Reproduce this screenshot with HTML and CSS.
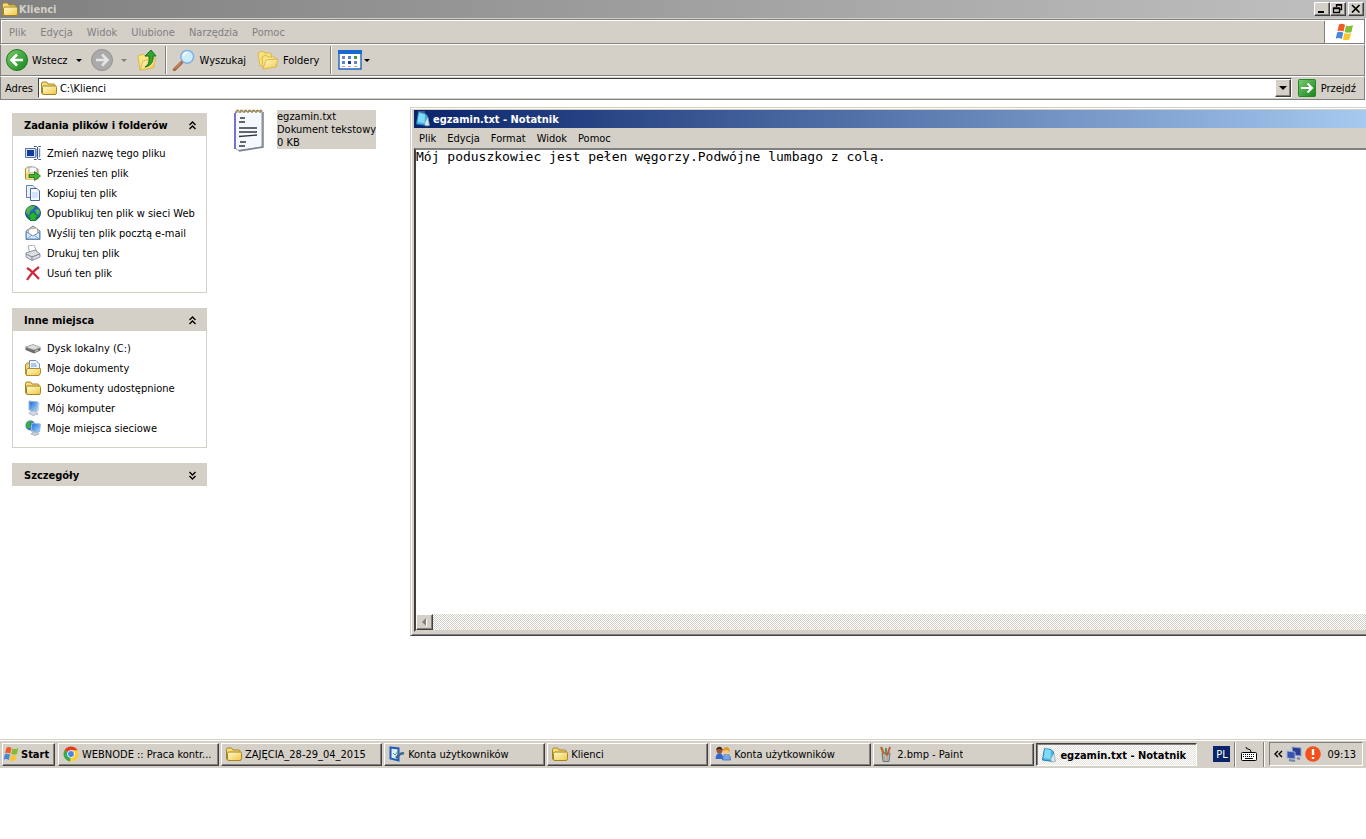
FILE: index.html
```
<!DOCTYPE html>
<html lang="pl">
<head>
  <meta charset="UTF-8" />
  <meta name="viewport" content="width=device-width, initial-scale=1.0"/>
  <title>Klienci</title>
  <link rel="stylesheet" href="styles.css">
</head>
<body>

  <!-- SHARED ICONS -->
  <svg class="sprite" aria-hidden="true">
    <defs>
      <linearGradient id="gold" x1="0" y1="0" x2="1" y2="1">
        <stop offset="0" stop-color="#fffbd0"/><stop offset="1" stop-color="#efc744"/>
      </linearGradient>
      <linearGradient id="green" x1="0" y1="0" x2="1" y2="1">
        <stop offset="0" stop-color="#7ccb6d"/><stop offset="1" stop-color="#14851c"/>
      </linearGradient>
      <linearGradient id="blue" x1="0" y1="0" x2="1" y2="1">
        <stop offset="0" stop-color="#1d63d8"/><stop offset="1" stop-color="#9be0ff"/>
      </linearGradient>
      <symbol id="folder" viewBox="0 0 16 16">
        <path d="M.5 12V3.500Q.5 2 2 2H5.500L7 4H12.500Q14 4 14 5.500V12Q14 14 12.500 14H2Q.5 14 .5 12Z" fill="#f6dc76" stroke="#a8831d"/>
        <path d="M3 6H14.500Q15.500 6 15.500 7.500V12.500Q15.500 14.500 14 14.500H3Q1.500 14.500 1.500 13V7.500Q1.500 6 3 6Z" fill="url(#gold)" stroke="#a8831d"/>
      </symbol>
      <symbol id="notes" viewBox="0 0 16 16">
        <path d="M3.500 1.500L10 2.500L12.500 5L12 14.500L1.500 13Z" fill="#49b4e8" stroke="#247caf"/>
        <path d="M4 2L10 3L9.500 12L2.500 11Z" fill="#7fd9f7"/>
        <path d="M9.500 12L13 6L14.500 14.500L10.500 15Z" fill="#d3e6ee" stroke="#8297a3" stroke-width=".6"/>
        <path d="M3.500 1H10" stroke="#d8e7ee" stroke-dasharray="1 1"/>
      </symbol>
      <symbol id="flag" viewBox="0 0 20 18">
        <path d="M4 1.500Q7 0 10 2L8.500 8.500Q5.500 7 2.500 8.200Z" fill="#f15a28"/>
        <path d="M11 2.500Q14.500 4 18 2L16.500 9Q13 10.500 9.700 9Z" fill="#83bd37"/>
        <path d="M2.200 9.200Q5.500 8 8.300 9.700L6.800 16Q3.800 14.200.7 15.700Z" fill="#4888d8"/>
        <path d="M9.400 10.100Q13 11.500 16.200 10.100L14.600 16.300Q11 18 7.900 16.500Z" fill="#fbc72c"/>
      </symbol>
      <symbol id="up" viewBox="0 0 9 9">
        <path d="M1.500 4L4.500 1L7.500 4M1.500 8L4.500 5L7.500 8" fill="none" stroke="#000" stroke-width="1.400"/>
      </symbol>
      <symbol id="monitor" viewBox="0 0 16 16">
        <path d="M4 1L13 2L12 11L4 10Z" fill="url(#blue)" stroke="#a5b8d8"/>
        <path d="M13 2L14.500 3L13.500 11.500L12 11Z" fill="#c5cedd"/>
        <path d="M6 11H11L13 14L8 15.500L4 13.500Z" fill="#d1d8e4" stroke="#8e9bb0" stroke-width=".6"/>
      </symbol>
    </defs>
  </svg>

  <main class="explorer">
    <header class="titlebar">
      <svg class="icon"><use href="#folder"/></svg>
      <h1>Klienci</h1>
      <div class="window-buttons">
        <button type="button" aria-label="Minimalizuj"><svg viewBox="0 0 12 10"><path d="M2 8H8" stroke="#000" stroke-width="2"/></svg></button>
        <button type="button" aria-label="Przywróć"><svg viewBox="0 0 12 10"><path d="M4.500 3V.5H9.500V5.500H8M4 1H10M1.500 4.500H7.500V8.500H1.500ZM1 4H8" fill="none" stroke="#000" stroke-width="1.300"/></svg></button>
        <button type="button" class="close" aria-label="Zamknij"><svg viewBox="0 0 12 10"><path d="M2 1L9.500 8.500M9.500 1L2 8.500" stroke="#000" stroke-width="1.700"/></svg></button>
      </div>
    </header>

    <div class="menu-row">
      <nav class="menu disabled">
        <button type="button">Plik</button>
        <button type="button">Edycja</button>
        <button type="button">Widok</button>
        <button type="button">Ulubione</button>
        <button type="button">Narzędzia</button>
        <button type="button">Pomoc</button>
      </nav>
      <div class="brand"><svg><use href="#flag"/></svg></div>
    </div>

    <div class="toolbar">
      <button type="button" class="tool back">
        <svg class="tool-icon" viewBox="0 0 22 22"><circle cx="11" cy="11" r="10.500" fill="url(#green)" stroke="#187c20"/><path d="M17 11H6M11 5.500L5.500 11L11 16.500" fill="none" stroke="#fff" stroke-width="2.600"/></svg>
        Wstecz
      </button>
      <button type="button" class="drop" aria-label="Historia wstecz"></button>
      <button type="button" class="tool" aria-label="Dalej">
        <svg class="tool-icon" viewBox="0 0 22 22"><circle cx="11" cy="11" r="10.500" fill="#aaa" stroke="#929292"/><path d="M5 11H16M11 5.500L16.500 11L11 16.500" fill="none" stroke="#e5e5e5" stroke-width="2.600"/></svg>
      </button>
      <button type="button" class="drop grey" aria-label="Historia dalej"></button>
      <button type="button" class="tool" aria-label="Do góry">
        <svg class="tool-icon" viewBox="0 0 22 22"><path d="M2 7L7 5L9 7L16 6L18 18L4 21Z" fill="#f9e582" stroke="#dcb84f"/><path d="M4 21L7 12L20 9L17 19Z" fill="url(#gold)" stroke="#dcb84f"/><path d="M9 18Q14 16 13 7H9L15 1L20 7H17Q18 16 9 18Z" fill="#37a52c" stroke="#16751b"/></svg>
      </button>
      <span class="sep"></span>
      <button type="button" class="tool search">
        <svg class="tool-icon wide" viewBox="0 0 24 24"><path d="M1.500 22.500L9.500 14.500" stroke="#a8653f" stroke-width="3.500" stroke-linecap="round"/><path d="M2 21.500L9 14.500" stroke="#e0a67e"/><circle cx="15.500" cy="8.500" r="7" fill="#ccecff" stroke="#7baee2" stroke-width="1.600"/><path d="M11 8Q12 4 16 4" fill="none" stroke="#fff" stroke-width="2"/></svg>
        Wyszukaj
      </button>
      <button type="button" class="tool folders">
        <svg class="tool-icon" viewBox="0 0 22 22"><path d="M1 4L5 2L8 4L14 4L15 14L3 17Z" fill="#f8e27a" stroke="#dcb84f"/><path d="M5 8L9 6L11 8L18 8L20 17L6 20Z" fill="#f9e484" stroke="#dcb84f"/><path d="M6 20L9 11L21 10L19 18Z" fill="url(#gold)" stroke="#dcb84f"/></svg>
        Foldery
      </button>
      <span class="sep"></span>
      <button type="button" class="tool views" aria-label="Widoki">
        <svg class="tool-icon wide" viewBox="0 0 24 20"><path d="M1 1H23V19H1Z" fill="#fff" stroke="#1b65bd" stroke-width="1.400"/><path d="M0 0H24V4H0Z" fill="#176bd0"/><path d="M4 6h3v3H4zM16 11h3v3h-3z" fill="#777fb4"/><path d="M10 6h3v3h-3zM4 11h3v3H4z" fill="#5484cf"/><path d="M16 6h3v3h-3z" fill="#389c48"/><path d="M10 11h3v3h-3z" fill="#193c92"/><path d="M4 16.500h3M10 16.500h3M16 16.500h3" stroke="#aaa"/></svg>
      </button>
      <button type="button" class="drop" aria-label="Wybierz widok"></button>
    </div>

    <form class="address-bar">
      <label for="address">Adres</label>
      <div class="address-box">
        <svg class="icon"><use href="#folder"/></svg>
        <input type="text" id="address" value="C:\Klienci">
        <button type="button" class="combo" aria-label="Pokaż listę"></button>
      </div>
      <button type="button" class="go">
        <svg viewBox="0 0 18 18"><rect x=".5" y=".5" width="17" height="17" rx="1" fill="url(#green)" stroke="#27882b"/><path d="M3 9H14M9.500 4.500L14 9L9.500 13.500" fill="none" stroke="#fff" stroke-width="2"/></svg>
        Przejdź
      </button>
    </form>

    <div class="content">
      <aside class="sidebar">
        <section class="panel">
          <h2>Zadania plików i folderów <svg><use href="#up"/></svg></h2>
          <ul>
            <li><a href="#"><svg class="icon" viewBox="0 0 16 16"><path d="M.5 3.500H10.500V12.500H.5Z" fill="#d6e4fb" stroke="#5673aa"/><path d="M2 5H9V11H2Z" fill="#123b9d"/><path d="M9 1.500H11.500L12.500 2.500L13.500 1.500H16M12.500 2V14M9 14.500H11.500L12.500 13.500L13.500 14.500H16" fill="none" stroke="#43567c"/><path d="M11 4V12M14.500 3.500V12.500" stroke="#6f8cc2" stroke-width="1.400"/></svg>Zmień nazwę tego pliku</a></li>
            <li><a href="#"><svg class="icon" viewBox="0 0 16 16"><path d="M.5 4L2.500 2H7L8 4H13V14H.5Z" fill="url(#gold)" stroke="#ac8b38"/><path d="M4 2H10L12 4V8H4Z" fill="#f6f7ff" stroke="#9ba6bc"/><path d="M1 8H12V14H1Z" fill="#f5d873"/><path d="M4 9.500H9.500V6.500L15.500 11L9.500 15.500V12.500H4Z" fill="#42b332" stroke="#176f20" stroke-width=".8"/></svg>Przenieś ten plik</a></li>
            <li><a href="#"><svg class="icon" viewBox="0 0 16 16"><path d="M1.500.5H8L10.500 3V12.500H1.500Z" fill="#e7f1ff" stroke="#6681b0"/><path d="M5.500 3.500H12L14.500 6V15.500H5.500Z" fill="#f3f9ff" stroke="#4c6697"/><path d="M7 8H13M7 10H13M7 12H13" stroke="#b5cdec"/></svg>Kopiuj ten plik</a></li>
            <li><a href="#"><svg class="icon" viewBox="0 0 16 16"><circle cx="8" cy="8" r="7.500" fill="#2869bd" stroke="#274f85"/><path d="M2 3Q6 0 10 1L8 4L5 6L4 10L1 8ZM10 5L14 4L15 8L12 10Z" fill="#53b64a"/><path d="M8 7L14 12H11V15.500H5V12H2Z" fill="#26b434" stroke="#0c701c" stroke-width=".7"/></svg>Opublikuj ten plik w sieci Web</a></li>
            <li><a href="#"><svg class="icon" viewBox="0 0 16 16"><path d="M1 6L8 1L15 6V14.500H1Z" fill="#bfdaf6" stroke="#6084af"/><path d="M4 4L12 3L13 9L8 12L3 9Z" fill="#fff" stroke="#d2a772"/><path d="M1.500 7L8 11L14.500 7V14H1.500Z" fill="#d9eaff" stroke="#6f94bd"/><path d="M2 14L7 10M14 14L9 10" stroke="#7e9dc1"/></svg>Wyślij ten plik pocztą e-mail</a></li>
            <li><a href="#"><svg class="icon" viewBox="0 0 16 16"><path d="M3 1L9 0L12 7L5 9Z" fill="#fff" stroke="#a5aaba"/><path d="M1 8L10 5L15 9V12L7 15.500L1 12Z" fill="#dcdee4" stroke="#8c929e"/><path d="M1 9L7 12L15 9M7 12V15" fill="none" stroke="#7b8291"/></svg>Drukuj ten plik</a></li>
            <li><a href="#"><svg class="icon" viewBox="0 0 16 16"><path d="M2 3Q7 6 14 14M14 2Q7 7 2 15" fill="none" stroke="#d02a3d" stroke-width="2.200"/></svg>Usuń ten plik</a></li>
          </ul>
        </section>

        <section class="panel">
          <h2>Inne miejsca <svg><use href="#up"/></svg></h2>
          <ul>
            <li><a href="#"><svg class="icon" viewBox="0 0 16 16"><path d="M.5 7L8 4.500L15.500 7.500V10.500L9 13.500L.5 10Z" fill="#6f6f6f"/><path d="M.5 7L8 4.500L15.500 7.500L9 10Z" fill="#ddd" stroke="#999" stroke-width=".6"/><path d="M10 11.500L13 10" stroke="#d5f1c8"/></svg>Dysk lokalny (C:)</a></li>
            <li><a href="#"><svg class="icon" viewBox="0 0 16 16"><path d="M.5 4.500L2 3H5V14H.5Z" fill="#f4d268" stroke="#b48b2e"/><path d="M4.500.5H11L14.500 4V13H4.500Z" fill="#eef6ff" stroke="#7691ba"/><path d="M6 4H11M6 6H12" stroke="#6d9bd2"/><path d="M2.500 8.500H15.500V13L14 15.500H1.500V10Z" fill="url(#gold)" stroke="#b48b2e"/></svg>Moje dokumenty</a></li>
            <li><a href="#"><svg class="icon"><use href="#folder"/></svg>Dokumenty udostępnione</a></li>
            <li><a href="#"><svg class="icon"><use href="#monitor"/></svg>Mój komputer</a></li>
            <li><a href="#"><svg class="icon" viewBox="0 0 16 16"><circle cx="5.500" cy="5.500" r="5" fill="#2b77c7"/><path d="M1 3Q4 0 7 1L5 4L6 7L3 9L1 6Z" fill="#3dac43"/><path d="M7 3L15.500 4L14.500 12L6 11Z" fill="url(#blue)" stroke="#a4b8df"/><path d="M8 12H12L14 14L10 15.500L6 14Z" fill="#c8d1e0" stroke="#8792a8" stroke-width=".6"/></svg>Moje miejsca sieciowe</a></li>
          </ul>
        </section>

        <section class="panel collapsed">
          <h2>Szczegóły <svg class="flip"><use href="#up"/></svg></h2>
        </section>
      </aside>

      <a href="#" class="file">
        <svg viewBox="0 0 32 46">
          <path d="M2.500 4L29 3V39L5 42.500L2.500 40Z" fill="#f5f8ff" stroke="#8d91a5"/>
          <path d="M2 5V41" stroke="#7b71c8" stroke-width="2"/>
          <path d="M30 4V39L6 43" fill="none" stroke="#77828d" stroke-width="1.500"/>
          <path d="M3 5Q3 1 6 3M7 5Q7 1 10 3M11 5Q11 1 14 3M15 5Q15 1 18 3M19 5Q19 1 22 3M23 5Q23 1 26 3M27 5Q27 1 29 3" fill="none" stroke="#a88745" stroke-width="1.500"/>
          <path d="M7 10H12M6 14H12M6 20H24M6 24H24M6 28.500L24 27M7 34H13M6 38H12" stroke="#34363e" stroke-width="1.400"/>
        </svg>
        <span class="file-info">egzamin.txt<br>Dokument tekstowy<br>0 KB</span>
      </a>
    </div>

    <section class="notepad">
      <header class="titlebar active">
        <svg class="icon"><use href="#notes"/></svg>
        <h2>egzamin.txt - Notatnik</h2>
      </header>
      <nav class="menu">
        <button type="button">Plik</button>
        <button type="button">Edycja</button>
        <button type="button">Format</button>
        <button type="button">Widok</button>
        <button type="button">Pomoc</button>
      </nav>
      <div class="editor">
        <textarea aria-label="Treść pliku" spellcheck="false" wrap="off">Mój poduszkowiec jest pełen węgorzy.Podwójne lumbago z colą.</textarea>
        <div class="scrollbar">
          <button type="button" aria-label="Przewiń w lewo"><svg viewBox="0 0 12 12"><path d="M8 3V11L4 7Z" fill="#fff"/><path d="M7 2V10L3 6Z" fill="#808080"/></svg></button>
        </div>
      </div>
    </section>
  </main>

  <footer class="taskbar">
    <button type="button" class="start"><svg><use href="#flag"/></svg>Start</button>
    <div class="tasks">
      <button type="button"><svg class="icon" viewBox="0 0 16 16"><circle cx="8" cy="8" r="7.500" fill="#ffd02e"/><path d="M8 8L1.500 4.300A7.500 7.500 0 0 1 14.500 4.300H8Z" fill="#e33a2e"/><path d="M8 8L7 15.400A7.500 7.500 0 0 1 1.500 4.300Z" fill="#38a852"/><circle cx="8" cy="8" r="3.800" fill="#fff"/><circle cx="8" cy="8" r="2.900" fill="#4486e8"/></svg><span>WEBNODE :: Praca kontr...</span></button>
      <button type="button"><svg class="icon"><use href="#folder"/></svg><span>ZAJĘCIA_28-29_04_2015</span></button>
      <button type="button"><svg class="icon" viewBox="0 0 16 16"><path d="M1.500 1.500L9.500 2.500V14.500L1.500 12.500Z" fill="#dceeff" stroke="#235cb4" stroke-width="2"/><path d="M4 7L6 9L9 5" fill="none" stroke="#4aa354"/><path d="M7 12L11 8M11 8L15 7" stroke="#42658f" stroke-width="2.500"/></svg><span>Konta użytkowników</span></button>
      <button type="button"><svg class="icon"><use href="#folder"/></svg><span>Klienci</span></button>
      <button type="button"><svg class="icon" viewBox="0 0 16 16"><path d="M.5 13Q1 7 4.500 7Q8 7 8 13Z" fill="#3268cd"/><circle cx="4.500" cy="4.500" r="3" fill="#a15a30"/><path d="M1 4Q2 0 6 1L8 4L4 3Z" fill="#4a2818"/><path d="M7.500 14Q8 8 11.500 8Q15.500 8 15.500 14Z" fill="#79a6e6" stroke="#3561ab" stroke-width=".7"/><circle cx="11.500" cy="5.500" r="3" fill="#f8c886"/><path d="M8 5Q8 1 12 1Q15 2 15 6L12 4Z" fill="#dd9b27"/></svg><span>Konta użytkowników</span></button>
      <button type="button"><svg class="icon" viewBox="0 0 16 16"><path d="M4 7H12L11 15.500H5Z" fill="#a9c1cf" stroke="#607582"/><path d="M6 8L3 1" stroke="#bd6a32" stroke-width="2.400"/><path d="M8 9V2" stroke="#52975b" stroke-width="2"/><path d="M9 10L12 1" stroke="#d64f3d" stroke-width="2"/><path d="M6 9V15M9 9V15" stroke="#d68b45"/></svg><span>2.bmp - Paint</span></button>
      <button type="button" class="pressed"><svg class="icon"><use href="#notes"/></svg><span>egzamin.txt - Notatnik</span></button>
    </div>
    <button type="button" class="lang">PL</button>
    <button type="button" class="keyboard" aria-label="Klawiatura">
      <svg viewBox="0 0 18 14"><path d="M6 0Q6 2 8 2Q11 2 11 5" fill="none" stroke="#000"/><rect x="1.500" y="5.500" width="15" height="8" rx="1" fill="#fff" stroke="#000"/><path d="M3 7.500H15M3 9.500H15" stroke="#000" stroke-dasharray="1 1"/><path d="M5 11.500H13" stroke="#000"/></svg>
    </button>
    <div class="tray">
      <button type="button" aria-label="Pokaż ukryte ikony"><svg class="chevrons" viewBox="0 0 9 8"><path d="M4 1L1 4L4 7M8 1L5 4L8 7" fill="none" stroke="#000" stroke-width="1.400"/></svg></button>
      <svg class="icon" viewBox="0 0 16 16"><path d="M6 1L15 2V10L7 9Z" fill="#293d91" stroke="#8f9dc9"/><path d="M1 5L9 6V13L1 12Z" fill="#3854b0" stroke="#a3b1da"/><path d="M3 14L9 15M11 12L14 13" stroke="#7783a5" stroke-width="2"/></svg>
      <svg class="icon" viewBox="0 0 16 16"><circle cx="8" cy="8" r="7.800" fill="#f2511b"/><path d="M8 3V9M8 11V13" stroke="#fff" stroke-width="2.400"/></svg>
      <time>09:13</time>
    </div>
  </footer>

</body>
</html>
```
FILE: styles.css
```
* {
  box-sizing: border-box;
}

body {
  margin: 0;
  min-height: 100vh;
  padding-bottom: 71px;
  display: flex;
  flex-direction: column;
  overflow: hidden;
  background: #fff;
  color: #000;
  font-family: "DejaVu Sans Condensed", "DejaVu Sans", sans-serif;
  font-stretch: condensed;
  font-size: 11px;
  line-height: 13px;
}

button,
input {
  font: inherit;
  color: inherit;
}

button {
  display: flex;
  align-items: center;
  padding: 0;
  border: none;
  background: none;
  white-space: nowrap;
}

a {
  color: inherit;
  text-decoration: none;
}

svg {
  display: block;
  flex: none;
}

.sprite {
  position: absolute;
  width: 0;
  height: 0;
}

.icon {
  width: 16px;
  height: 16px;
}

/* Explorer window */
.explorer {
  position: relative;
  flex: 1;
  display: flex;
  flex-direction: column;
  overflow: hidden;
}

.titlebar {
  display: flex;
  align-items: center;
  gap: 1px;
  height: 18px;
  padding: 0 2px;
  background: linear-gradient(to right, #808080, #c0c0c0);
  color: #d4d0c8;
}

.titlebar h1,
.titlebar h2 {
  flex: 1;
  margin: 0;
  font-size: 11px;
  font-weight: bold;
}

.window-buttons {
  display: flex;
}

.window-buttons button {
  width: 16px;
  height: 14px;
  justify-content: center;
}

.window-buttons svg {
  width: 12px;
  height: 10px;
}

.window-buttons .close {
  margin-left: 2px;
}

.window-buttons button,
.combo,
.scrollbar button,
.start,
.tasks button {
  background: #d4d0c8;
  border: 1px solid;
  border-color: #fff #404040 #404040 #fff;
  box-shadow: inset -1px -1px #808080;
}

.menu-row {
  display: flex;
  height: 26px;
  margin-right: 1px;
  background: #d4d0c8;
  border: 1px solid #808080;
  border-top-color: #d4d0c8;
  box-shadow: inset 0 1px #808080, inset 1px 2px #fff;
}

.menu {
  display: flex;
  align-items: center;
  gap: 14px;
  padding-left: 8px;
}

.disabled {
  flex: 1;
  padding-top: 2px;
  color: #808080;
}

.brand {
  display: flex;
  align-items: center;
  justify-content: center;
  width: 40px;
  margin-top: 2px;
  background: #fff;
  border-left: 1px solid #808080;
}

.brand svg {
  width: 20px;
  height: 18px;
}

.toolbar {
  display: flex;
  align-items: center;
  height: 32px;
  margin-right: 1px;
  padding-left: 5px;
  background: #d4d0c8;
  border: 1px solid #808080;
  border-top-color: #fff;
}

.tool {
  gap: 4px;
}

.tool-icon {
  width: 22px;
  height: 22px;
}

.tool-icon.wide {
  width: 24px;
}

.drop {
  width: 23px;
  justify-content: center;
}

.drop::after,
.combo::after {
  content: "";
  border: 3px solid transparent;
  border-top-color: #000;
  border-bottom: none;
}

.drop.grey::after {
  border-top-color: #808080;
}

.sep {
  width: 2px;
  height: 28px;
  margin: 0 5px 0 7px;
  border-left: 1px solid #808080;
  border-right: 1px solid #fff;
}

.folders {
  margin: 0 4px 0 11px;
}

.views {
  margin-left: 1px;
}

.views + .drop {
  width: 10px;
}

.views .tool-icon {
  height: 20px;
}

.address-bar {
  display: flex;
  align-items: center;
  height: 24px;
  margin-right: 1px;
  padding: 1px 8px 1px 4px;
  background: #d4d0c8;
  border: 1px solid #808080;
  border-top-color: #fff;
}

.address-box {
  flex: 1;
  display: flex;
  align-items: center;
  gap: 3px;
  height: 20px;
  margin: 0 6px 0 5px;
  padding-left: 2px;
  background: #fff;
  border: 1px solid;
  border-color: #404040 #fff #fff #404040;
}

.address-box input {
  flex: 1;
  min-width: 0;
  padding: 0;
  border: none;
  outline: none;
  background: none;
}

.combo {
  width: 16px;
  height: 18px;
  justify-content: center;
}

.combo::after {
  border-width: 4px;
}

.go {
  gap: 5px;
}

.go svg {
  width: 18px;
  height: 18px;
}

.content {
  flex: 1;
  display: flex;
  align-items: flex-start;
  gap: 26px;
  padding: 8px 12px;
}

/* Task panels */
.sidebar {
  display: flex;
  flex-direction: column;
  gap: 15px;
  width: 195px;
  padding-top: 5px;
}

.panel h2 {
  display: flex;
  align-items: center;
  justify-content: space-between;
  height: 23px;
  margin: 0;
  padding: 2px 10px 0 12px;
  background: #d4d0c8;
  font-size: 11px;
}

.panel h2 svg {
  width: 9px;
  height: 9px;
}

.panel h2 .flip {
  transform: scaleY(-1);
}

.panel ul {
  margin: 0;
  padding: 7px 0 9px 12px;
  list-style: none;
  border: 1px solid #d4d0c8;
  border-top: none;
}

.panel a {
  display: flex;
  align-items: center;
  gap: 6px;
  height: 20px;
  white-space: nowrap;
}

.file {
  display: flex;
  gap: 12px;
}

.file > svg {
  width: 32px;
  height: 46px;
}

.file-info {
  align-self: flex-start;
  margin-top: 2px;
  background: #d4d0c8;
  white-space: nowrap;
}

/* Notepad window, runs past the right edge of the screen */
.notepad {
  position: absolute;
  top: 107px;
  left: 410px;
  right: -8px;
  height: 529px;
  display: flex;
  flex-direction: column;
  padding: 2px 3px 3px;
  background: #d4d0c8;
  border: 1px solid;
  border-color: #d4d0c8 #404040 #404040 #d4d0c8;
  box-shadow: inset 1px 1px #fff, inset -1px -1px #808080;
}

.titlebar.active {
  padding-left: 1px;
  gap: 2px;
  background: linear-gradient(to right, #0a246a, #a6caf0);
  color: #fff;
}

.notepad .menu {
  height: 20px;
  gap: 11px;
  padding-left: 5px;
}

.editor {
  flex: 1;
  display: flex;
  flex-direction: column;
  border: 2px solid;
  border-color: #808080 #fff #d4d0c8 #404040;
  background: #fff;
}

.editor textarea {
  flex: 1;
  padding: 0;
  border: none;
  outline: none;
  resize: none;
  overflow: hidden;
  font-family: "DejaVu Sans Mono", monospace;
  font-stretch: normal;
  font-size: 13px;
  line-height: 14px;
}

.scrollbar {
  height: 16px;
  background: repeating-conic-gradient(#fff 0 25%, #d4d0c8 0 50%) 0 0 / 2px 2px;
}

.scrollbar button {
  width: 17px;
  height: 16px;
  justify-content: center;
}

.scrollbar svg {
  width: 12px;
  height: 12px;
}

/* Taskbar */
.taskbar {
  display: flex;
  align-items: center;
  height: 29px;
  padding: 0 3px 0 2px;
  background: #d4d0c8;
  border-top: 1px solid #d4d0c8;
  box-shadow: inset 0 1px #fff;
}

.start {
  width: 53px;
  height: 23px;
  gap: 1px;
  font-weight: bold;
}

.start svg {
  width: 17px;
  height: 16px;
}

.tasks {
  flex: 1;
  display: flex;
  gap: 2px;
  min-width: 0;
  margin: 0 16px 0 3px;
}

.tasks button {
  flex: 1;
  min-width: 0;
  height: 23px;
  gap: 3px;
  padding: 0 4px;
}

.tasks span {
  overflow: hidden;
}

.tasks .pressed {
  padding-top: 2px;
  background: repeating-conic-gradient(#fff 0 25%, #e4e1dc 0 50%) 0 0 / 2px 2px;
  border-color: #404040 #fff #fff #404040;
  box-shadow: inset 1px 1px #808080;
  font-weight: bold;
}

.lang {
  width: 17px;
  height: 16px;
  justify-content: center;
  background: #0a246a;
  color: #fff;
}

.keyboard {
  width: 30px;
  height: 25px;
  margin: 0 5px 0 4px;
  justify-content: center;
  border: 1px solid #808080;
  border-width: 0 1px;
  box-shadow: inset 1px 0 #fff, 1px 0 #fff;
}

.keyboard svg {
  width: 18px;
  height: 14px;
}

.tray {
  display: flex;
  align-items: center;
  gap: 3px;
  height: 24px;
  padding: 0 6px 0 4px;
  border: 1px solid;
  border-color: #808080 #fff #fff #808080;
}

.chevrons {
  width: 9px;
  height: 8px;
}

.tray time {
  margin-left: 3px;
}
```
